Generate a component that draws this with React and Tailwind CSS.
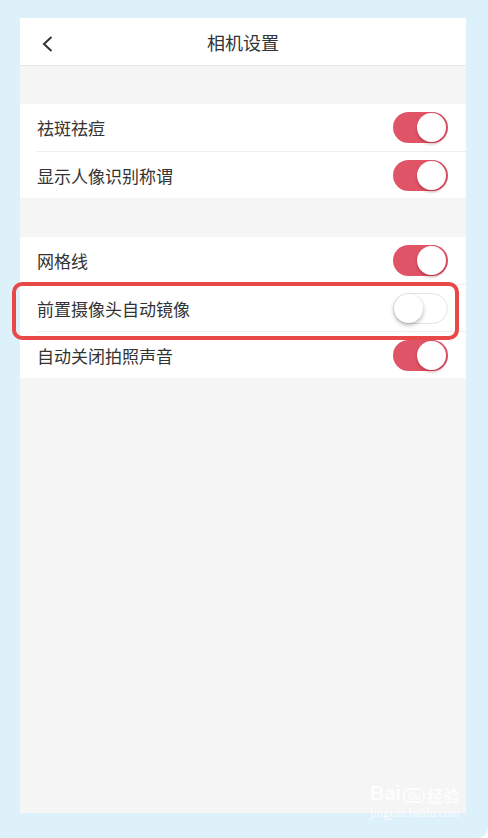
import React from "react";

function Toggle({ on }) {
  return on ? (
    <div className="relative w-[55px] h-[31px] rounded-full bg-[#e05467]">
      <div className="absolute right-[2px] top-[1px] w-[29px] h-[29px] rounded-full bg-white shadow-[0_2px_3px_rgba(120,0,20,0.35)]" />
    </div>
  ) : (
    <div className="relative w-[55px] h-[31px] rounded-full bg-white border border-[#e4e4e4]">
      <div className="absolute left-[0px] top-[0px] w-[29px] h-[29px] rounded-full bg-white shadow-[0_2px_4px_rgba(0,0,0,0.3)]" />
    </div>
  );
}

function Row({ label, on, first }) {
  return (
    <div className="h-[47px] bg-white pl-[17px]">
      <div
        className={
          "h-full flex items-center justify-between pr-[18px] " +
          (first ? "" : "border-t border-[#ededed]")
        }
      >
        <span className="text-[17px] text-[#333] leading-none">{label}</span>
        <Toggle on={on} />
      </div>
    </div>
  );
}

export default function App() {
  return (
    <div
      className="relative w-[488px] h-[838px] bg-[#ddf1fb] pt-[18px] pl-[20px] overflow-hidden rounded-br-[10px]"
      style={{ fontFamily: '"Noto Sans CJK SC", "Noto Sans", sans-serif' }}
    >
      <div className="w-[446px] h-[795px] bg-[#f5f5f5] flex flex-col">
        <div className="h-[48px] bg-white border-b border-[#e6e6e6] flex items-center relative">
          <svg className="absolute left-[22px] top-[18px]" width="11" height="16" viewBox="0 0 11 16">
            <path d="M9.5 1 L2 8 L9.5 15" fill="none" stroke="#333" strokeWidth="2" />
          </svg>
          <div className="w-full text-center text-[18px] text-[#333] leading-none">相机设置</div>
        </div>
        <div className="h-[38px]" />
        <Row label="祛斑祛痘" on first />
        <Row label="显示人像识别称谓" on />
        <div className="h-[39px]" />
        <Row label="网格线" on first />
        <Row label="前置摄像头自动镜像" on={false} />
        <Row label="自动关闭拍照声音" on />
      </div>

      <div className="absolute left-[12px] top-[282px] w-[447px] h-[58px] border-[4px] border-[#e84848] rounded-[10px]" />

      <div className="absolute left-[370px] top-[783px] flex flex-col items-center text-white opacity-80">
        <div className="flex items-end leading-none">
          <span className="text-[20px] font-bold" style={{ fontFamily: '"Liberation Sans", sans-serif' }}>Bai</span>
          <span className="ml-[2px] text-[11px] font-bold border-2 border-white rounded-[6px] px-[2px]">du</span>
          <span className="ml-[2px] text-[16px] font-bold">经验</span>
        </div>
        <span className="text-[12px] leading-none mt-[4px]" style={{ fontFamily: '"Liberation Serif", serif' }}>jingyan.baidu.com</span>
      </div>
    </div>
  );
}
